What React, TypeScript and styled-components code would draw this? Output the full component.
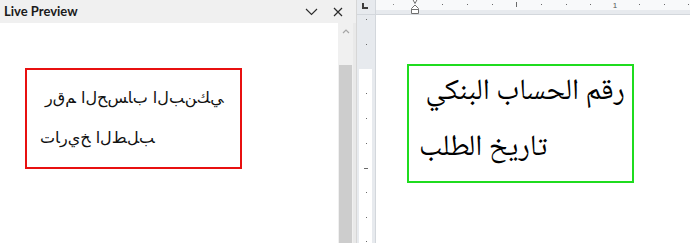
import React from "react";
import styled, { createGlobalStyle } from "styled-components";

const Global = createGlobalStyle`
  html, body { margin: 0; padding: 0; background: #ffffff; }
  body { font-family: "Noto Sans", "DejaVu Sans", sans-serif; }
`;

const Screen = styled.div`
  width: 690px;
  height: 243px;
  display: flex;
  overflow: hidden;
  background: #ffffff;
`;

const PreviewPane = styled.section`
  width: 356px;
  flex: none;
  display: flex;
  flex-direction: column;
  border-right: 1px solid #d6d6d6;
  background: #f0f0f0;
`;

const PaneHeader = styled.header`
  height: 23px;
  flex: none;
  display: flex;
  align-items: center;
  padding-left: 4px;
  padding-right: 11px;
  background: #f0f0f0;
`;

const PaneTitle = styled.h1`
  margin: 0;
  flex: 1;
  font-family: "Lato", "Noto Sans", sans-serif;
  font-weight: 700;
  font-size: 13px;
  color: #1b1b1b;
  line-height: 23px;
`;

const HeaderButton = styled.button<{ $gap: number }>`
  width: 14px;
  height: 14px;
  margin-left: ${(p) => p.$gap}px;
  padding: 0;
  border: 0;
  background: transparent;
  display: flex;
  align-items: center;
  justify-content: center;
`;

const PaneBody = styled.div`
  flex: 1;
  display: flex;
  min-height: 0;
`;

const PreviewCanvas = styled.div`
  width: 338px;
  flex: none;
  background: #ffffff;
  padding: 45px 0 0 25px;
  box-sizing: border-box;
`;

const Scrollbar = styled.div`
  width: 15px;
  flex: none;
  display: flex;
  flex-direction: column;
  align-items: center;
  background: #f0f0f0;
`;

const ScrollArrow = styled.div`
  height: 42px;
  width: 100%;
  display: flex;
  justify-content: center;
  padding-top: 6px;
  box-sizing: border-box;
`;

const ScrollThumb = styled.div`
  width: 13px;
  flex: 1;
  background: #cdcdcd;
`;

const Gutter = styled.div`
  width: 3px;
  flex: none;
  background: #e9e9e9;
`;

const FramedBox = styled.div<{ $color: string; $w: number; $h: number }>`
  width: ${(p) => p.$w}px;
  height: ${(p) => p.$h}px;
  box-sizing: border-box;
  border: 2px solid ${(p) => p.$color};
`;

/* The preview draws each letter on its own, left to right, without joining. */
const PreviewText = styled.p`
  margin: 0;
  padding: 8px 0 0 13px;
  font-family: "DejaVu Sans", sans-serif;
  font-size: 16px;
  line-height: 40px;
  color: #111;
  white-space: pre;
  direction: ltr;
  unicode-bidi: bidi-override;
  text-align: left;
`;

const DocArea = styled.div`
  flex: 1;
  display: grid;
  grid-template-columns: 19px 1fr;
  grid-template-rows: 15px 1fr;
`;

const RulerCorner = styled.div`
  background: #e7eaee;
  border-right: 1px solid #d3d7dc;
  border-bottom: 1px solid #d3d7dc;
  box-sizing: border-box;
  display: flex;
  padding: 3px 0 0 5px;
`;

const HRuler = styled.div`
  position: relative;
  background: linear-gradient(#f8f9fa 0, #f8f9fa 10px, #e7eaee 10px, #e7eaee 14px);
  border-bottom: 1px solid #d3d7dc;
  box-sizing: border-box;
`;

const VRuler = styled.div`
  position: relative;
  background: #e7eaee;
  border-right: 1px solid #d3d7dc;
  box-sizing: border-box;
  padding: 54px 3px 0 2px;
`;

const VRulerPage = styled.div`
  height: 100%;
  background: #ffffff;
`;

const RulerMarks = styled.svg`
  position: absolute;
  left: 0;
  top: 0;
  overflow: visible;
`;

const Page = styled.div`
  background: #ffffff;
  padding: 49px 0 0 31px;
`;

const DocText = styled.p`
  margin: -1px 0 0;
  padding: 0 0 0 10px;
  font-family: "Noto Naskh Arabic", "Noto Sans Arabic", "DejaVu Sans", sans-serif;
  font-size: 29.5px;
  line-height: 56px;
  color: #000;
  white-space: pre;
  direction: ltr;
  text-align: left;
`;

const hTicks = [66, 91, 116, 165, 190, 214, 263, 288, 312];
const vDots = [4, 29, 78, 103, 128, 177, 202, 226];

const lines = [" رقم الحساب البنكي", "تاريخ الطلب"];
const unjoined = (s: string) => Array.from(s).join("\u200C");

export default function App() {
  return (
    <>
      <Global />
      <Screen>
        <PreviewPane>
          <PaneHeader>
            <PaneTitle>Live Preview</PaneTitle>
            <HeaderButton $gap={0} aria-label="Collapse">
              <svg width="13" height="8" viewBox="0 0 13 8">
                <polyline points="1,1 6.5,6.5 12,1" fill="none" stroke="#2b2b2b" strokeWidth="1.1" />
              </svg>
            </HeaderButton>
            <HeaderButton $gap={13} aria-label="Close">
              <svg width="10" height="10" viewBox="0 0 10 10">
                <path d="M1 1 L9 9 M9 1 L1 9" stroke="#2b2b2b" strokeWidth="1.2" />
              </svg>
            </HeaderButton>
          </PaneHeader>
          <PaneBody>
            <PreviewCanvas>
              <FramedBox $color="#e81010" $w={217} $h={101}>
                <PreviewText>{lines.map(unjoined).join("\n")}</PreviewText>
              </FramedBox>
            </PreviewCanvas>
            <Scrollbar>
              <ScrollArrow>
                <svg width="8" height="5" viewBox="0 0 8 5">
                  <polyline points="1,4 4,1 7,4" fill="none" stroke="#a6a6a6" strokeWidth="1.2" />
                </svg>
              </ScrollArrow>
              <ScrollThumb />
            </Scrollbar>
            <Gutter />
          </PaneBody>
        </PreviewPane>
        <DocArea>
          <RulerCorner>
            <svg width="7" height="6" viewBox="0 0 7 6">
              <path d="M1 0 V5 H6" fill="none" stroke="#3c3c3c" strokeWidth="2" />
            </svg>
          </RulerCorner>
          <HRuler>
            <RulerMarks width="313" height="15">
              <rect x="17" y="4" width="1" height="1" fill="#8a8a8a" />
              {hTicks.map((x) => (
                <rect key={x} x={x} y="4" width="1" height="1" fill="#6a6a6a" />
              ))}
              <rect x="140" y="2" width="1" height="5" fill="#6a6a6a" />
              <text x="239" y="8" fontSize="8" fontFamily="Liberation Sans, sans-serif" fill="#555" textAnchor="middle">
                1
              </text>
              <path d="M35.5 -3 L42.5 -3 L39 3.5 Z" fill="#ffffff" stroke="#707070" strokeWidth="1" />
              <path d="M35.5 13.5 V8.5 L39 5 L42.5 8.5 V13.5 Z M35.5 9.5 H42.5" fill="#ffffff" stroke="#707070" strokeWidth="1" />
            </RulerMarks>
          </HRuler>
          <VRuler>
            <VRulerPage />
            <RulerMarks width="19" height="228">
              {vDots.map((y) => (
                <rect key={y} x="9" y={y} width="1" height="1" fill="#6a6a6a" />
              ))}
              <rect x="7" y="153" width="4" height="1" fill="#6a6a6a" />
            </RulerMarks>
          </VRuler>
          <Page>
            <FramedBox $color="#1fdc1f" $w={227} $h={119}>
              <DocText>{lines.join("\n")}</DocText>
            </FramedBox>
          </Page>
        </DocArea>
      </Screen>
    </>
  );
}
